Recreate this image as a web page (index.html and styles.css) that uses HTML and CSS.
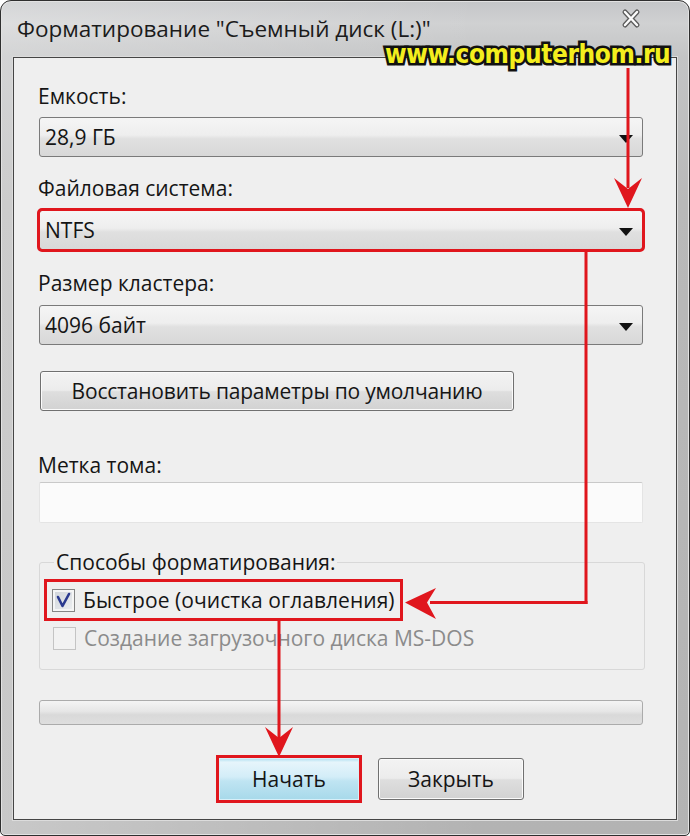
FILE: index.html
```html
<!DOCTYPE html>
<html lang="ru">
<head>
<meta charset="utf-8">
<title>Форматирование</title>
<link rel="stylesheet" href="styles.css">
</head>
<body>
<div class="window">
  <div class="titlebar">
    <span class="title">Форматирование "Съемный диск (L:)"</span>
    <svg class="close" width="20" height="21" viewBox="0 0 20 21">
      <path d="M4,4 L16,17 M16,4 L4,17" stroke="#5c5c5c" stroke-width="5" stroke-linecap="round" fill="none"/>
      <path d="M4,4 L16,17 M16,4 L4,17" stroke="#fbfbfb" stroke-width="2.4" stroke-linecap="round" fill="none"/>
    </svg>
  </div>
  <div class="client">
    <div class="label l1">Емкость:</div>
    <div class="combo c1"><span>28,9 ГБ</span><i class="arrow"></i></div>
    <div class="label l2">Файловая система:</div>
    <div class="combo c2"><span>NTFS</span><i class="arrow"></i></div>
    <div class="label l3">Размер кластера:</div>
    <div class="combo c3"><span>4096 байт</span><i class="arrow"></i></div>
    <div class="btn restore">Восстановить параметры по умолчанию</div>
    <div class="label l4">Метка тома:</div>
    <div class="input"></div>
    <fieldset class="group">
      <legend>Способы форматирования:</legend>
      <div class="check quick">
        <span class="cb on">
          <svg width="21" height="21" viewBox="0 0 21 21"><path d="M5,7 L9.5,16 L16,4" stroke="#2b3a8f" stroke-width="2.6" fill="none" stroke-linejoin="round" stroke-linecap="round"/></svg>
        </span>
        <span class="ctext">Быстрое (очистка оглавления)</span>
      </div>
      <div class="check disabled">
        <span class="cb"></span>
        <span class="ctext">Создание загрузочного диска MS-DOS</span>
      </div>
    </fieldset>
    <div class="progress"></div>
    <div class="actions">
      <div class="btn start">Начать</div>
      <div class="btn closebtn">Закрыть</div>
    </div>
  </div>
</div>
<div class="watermark">www.computerhom.ru</div>
<svg class="annot" width="690" height="836" viewBox="0 0 690 836">
  <g fill="#e0161d" stroke="none">
    <rect x="626.5" y="68" width="3" height="120"/>
    <path d="M614,178 L628,189 L642,178 L628,208 Z"/>
    <rect x="584.5" y="252" width="3" height="352"/>
    <rect x="430" y="601" width="157.5" height="3"/>
    <path d="M436,588 L427,602.5 L436,619 L405,602.5 Z"/>
    <rect x="277.5" y="620" width="3" height="120"/>
    <path d="M265,727 L279,738 L293,727 L279,757 Z"/>
  </g>
</svg>
</body>
</html>
```
FILE: styles.css
```css
* { box-sizing: border-box; }
html, body { margin: 0; padding: 0; }
body {
  width: 690px;
  height: 836px;
  overflow: hidden;
  position: relative;
  background: #ffffff;
  font-family: "Open Sans", "Noto Sans", sans-serif;
  color: #151515;
}

.window {
  width: 690px;
  height: 836px;
  border: 1px solid #2f2f2f;
  border-radius: 11px 11px 5px 5px;
  background:
    linear-gradient(90deg, rgba(255,255,255,0.28) 0, rgba(255,255,255,0.1) 45%, rgba(255,255,255,0) 70%),
    linear-gradient(180deg, #c4c6c8 0, #d0d1d2 22px, #c3c4c5 56px, #b9b9b9 200px, #b3b3b3 100%);
  box-shadow: inset 0 0 0 1px #e2e2e2;
  padding: 0 12px 15px 12px;
  display: flex;
  flex-direction: column;
}

.titlebar {
  height: 56px;
  flex: none;
  display: flex;
  justify-content: space-between;
  align-items: flex-start;
  padding: 13px 36px 0 4px;
}
.title {
  font-size: 22.5px;
  line-height: 30px;
  color: #1b1b1b;
  white-space: nowrap;
}
.close { margin-top: -6px; }

.client {
  flex: 1;
  border: 1px solid #454545;
  box-shadow: 0 0 0 1px #dcdcdc;
  background: #efefef;
  padding: 26px 33px 16px 25px;
}

.label {
  font-size: 21px;
  line-height: 24px;
  margin-left: -1px;
  white-space: nowrap;
}
.l2 { margin-top: 19px; }
.l3 { margin-top: 21px; }
.l4 { margin-top: 42px; }

.combo {
  height: 40px;
  border: 1px solid #7a7a7a;
  border-radius: 3px;
  background: linear-gradient(180deg, #f5f5f5 0, #eeeeee 45%, #e0e0e0 55%, #d8d8d8 100%);
  display: flex;
  align-items: center;
  justify-content: space-between;
  padding: 0 9px 0 5px;
  font-size: 21px;
  line-height: 38px;
  white-space: nowrap;
}
.c1 { margin-top: 9px; }
.c2 {
  margin-top: 10px;
  outline: 3px solid #e0161d;
  outline-offset: -1px;
}
.c3 { margin-top: 10px; }
.arrow {
  display: block;
  width: 0;
  height: 0;
  border-left: 7px solid transparent;
  border-right: 7px solid transparent;
  border-top: 8px solid #111111;
  margin-top: 3px;
}

.btn {
  height: 40px;
  border: 1px solid #707070;
  border-radius: 3px;
  background: linear-gradient(180deg, #f3f3f3 0, #ececec 48%, #dedede 52%, #d2d2d2 100%);
  box-shadow: inset 0 0 0 1px #fbfbfb;
  display: flex;
  align-items: center;
  justify-content: center;
  font-size: 21px;
  line-height: 24px;
  white-space: nowrap;
}
.restore {
  width: 474px;
  margin-top: 26px;
  margin-left: 1px;
  letter-spacing: -0.2px;
}

.input {
  height: 41px;
  margin-top: 5px;
  background: #fbfbfb;
  border: 1px solid #e4e4e4;
  border-top-color: #c9c9c9;
  border-radius: 2px;
}

.group {
  margin: 27px -2px 0 0;
  padding: 5px 4px 19px 4px;
  border: 1px solid #d8d8d8;
  border-radius: 3px;
  min-width: 0;
}
.group legend {
  font-size: 21px;
  line-height: 24px;
  padding: 0 2px;
  margin-left: 10px;
  white-space: nowrap;
}

.check {
  display: flex;
  align-items: center;
  font-size: 21px;
  line-height: 24px;
  white-space: nowrap;
}
.quick {
  width: 359px;
  height: 42px;
  border: 3px solid #e0161d;
  padding-left: 5px;
}
.quick .ctext { letter-spacing: 0.05px; }
.disabled {
  height: 24px;
  margin-top: 5px;
  padding-left: 9px;
  color: #8b8b8b;
}
.cb {
  width: 23px;
  height: 23px;
  flex: none;
  border: 1px solid #c4c4c4;
  background: #f2f2f2;
  margin-right: 8px;
  display: flex;
  align-items: center;
  justify-content: center;
}
.cb.on {
  border-color: #858585;
  background: linear-gradient(135deg, #cfd3d9 0, #eef0f2 100%);
  box-shadow: inset 0 0 0 2px #f5f5f5;
}

.progress {
  height: 25px;
  margin-top: 30px;
  border: 1px solid #ababab;
  border-radius: 3px;
  background: linear-gradient(180deg, #f4f4f4 0, #e6e6e6 45%, #d9d9d9 60%, #dedede 100%);
}

.actions {
  margin-top: 30px;
  height: 48px;
  display: flex;
  align-items: center;
  padding-left: 177px;
}
.start {
  width: 146px;
  height: 48px;
  border: 3px solid #e0161d;
  border-radius: 0;
  background: linear-gradient(180deg, #a8dcef 0, #e6f5fb 10%, #d3edf8 45%, #bfe4f2 55%, #a7d9ea 100%);
  box-shadow: inset 0 0 0 1px #d8eff8;
}
.closebtn {
  width: 146px;
  height: 42px;
  margin-left: 16px;
}

.watermark {
  position: absolute;
  left: 385px;
  top: 38px;
  font-family: "DejaVu Sans Condensed", "Liberation Sans", sans-serif;
  font-weight: bold;
  font-size: 26px;
  line-height: 32px;
  letter-spacing: -0.4px;
  color: #f3ee1e;
  -webkit-text-stroke: 5px #111111;
  paint-order: stroke fill;
  white-space: nowrap;
}

.annot {
  position: absolute;
  left: 0;
  top: 0;
  pointer-events: none;
}
```
